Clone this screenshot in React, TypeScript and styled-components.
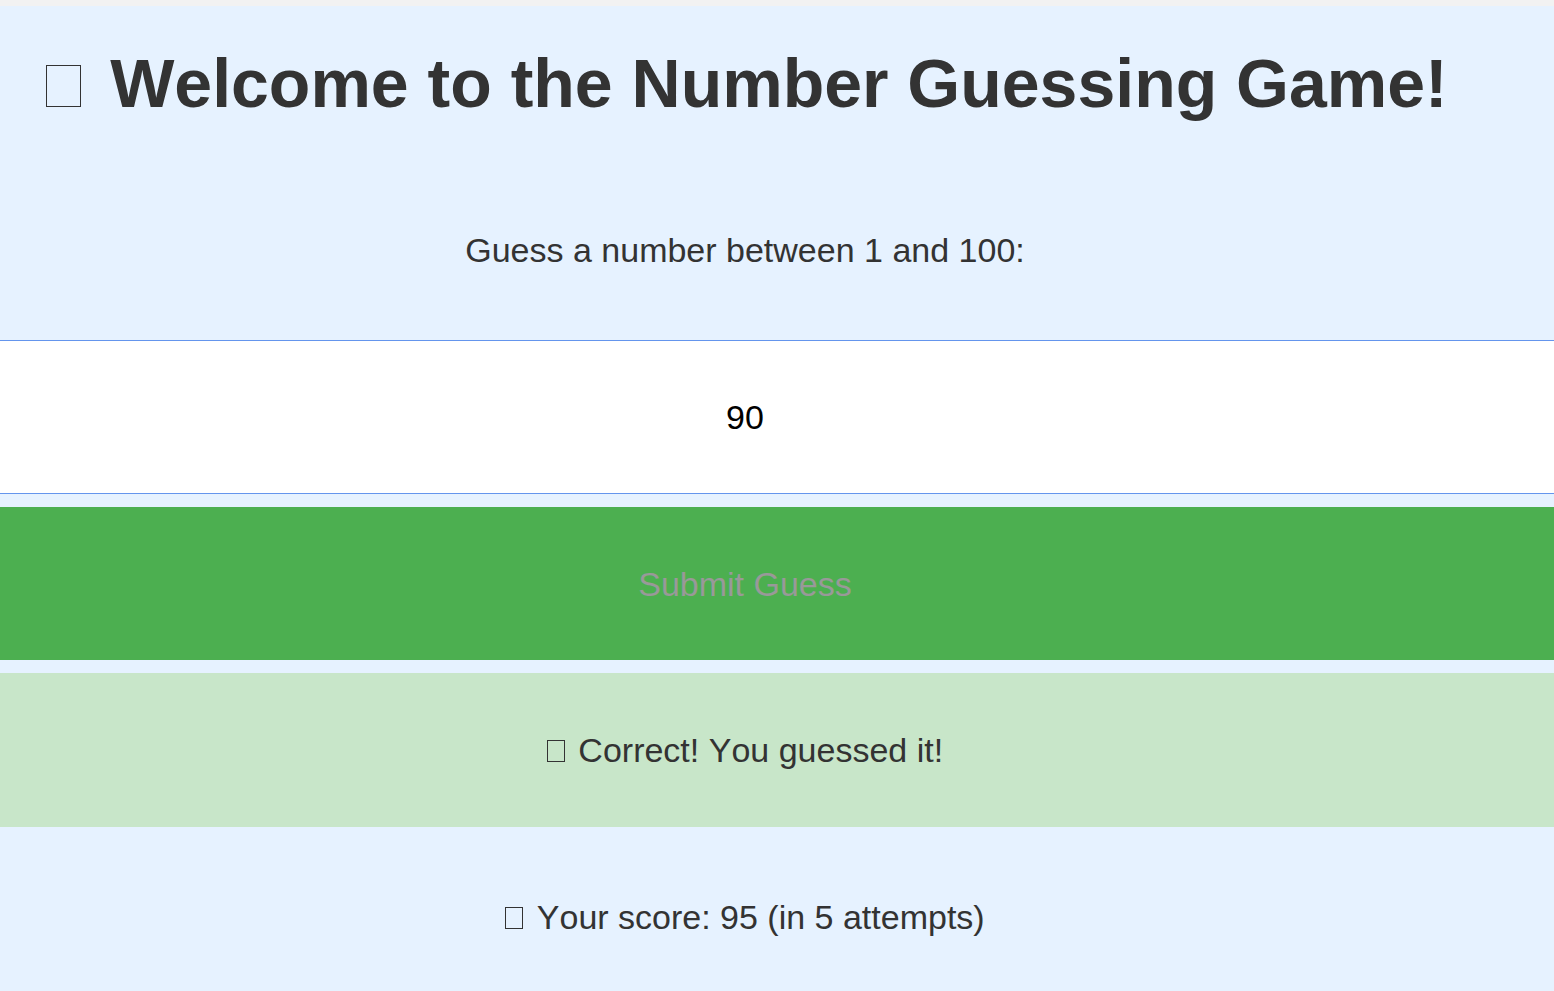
import React, { useState } from "react";
import styled, { createGlobalStyle, css } from "styled-components";

const GlobalStyle = createGlobalStyle`
  * {
    box-sizing: border-box;
  }

  body {
    margin: 0;
    background: #e6f2ff;
    color: #333333;
    font-family: "Liberation Sans", Arial, sans-serif;
    font-size: 34px;
    line-height: 40px;
    font-kerning: none;
  }
`;

const Page = styled.main`
  min-height: 100vh;
  border-top: 6px solid #f2f2f2;
`;

const GameForm = styled.form`
  display: flex;
  flex-direction: column;
  gap: 13px;
  text-align: center;
`;

const rowSpace = css`
  width: 100%;
  padding: 57px 64px 57px 0;
`;

const Title = styled.h1`
  margin: 0;
  padding: 37px 60px 37px 0;
  font-size: 68px;
  line-height: 80px;
  white-space: nowrap;
`;

const Prompt = styled.label`
  ${rowSpace}
`;

const GuessInput = styled.input`
  ${rowSpace}
  height: 154px;
  border: solid #6495ed;
  border-width: 1px 0;
  border-radius: 0;
  background: #ffffff;
  color: #000000;
  font: inherit;
  font-kerning: none;
  text-align: center;
  outline: none;
`;

const SubmitButton = styled.button`
  ${rowSpace}
  height: 153px;
  border: 0;
  background: #4caf50;
  color: #999999;
  font: inherit;
  font-kerning: none;
`;

const Result = styled.output<{ $correct?: boolean }>`
  ${rowSpace}
  padding-bottom: ${({ $correct }) => ($correct ? "57px" : "0")};
  background: ${({ $correct }) => ($correct ? "#c8e6c9" : "transparent")};
`;

const GlyphBox = styled.span<{ $large?: boolean }>`
  display: inline-block;
  width: ${({ $large }) => ($large ? "35px" : "18px")};
  height: ${({ $large }) => ($large ? "42px" : "22px")};
  margin-right: ${({ $large }) => ($large ? "10px" : "4px")};
  border: 1px solid #333333;
`;

export default function App() {
  const [guess, setGuess] = useState("90");

  return (
    <>
      <GlobalStyle />
      <Page>
        <GameForm onSubmit={(event) => event.preventDefault()}>
          <Title>
            <GlyphBox $large aria-hidden="true" /> Welcome to the Number Guessing Game!
          </Title>
          <Prompt htmlFor="guess">Guess a number between 1 and 100:</Prompt>
          <GuessInput
            id="guess"
            type="text"
            inputMode="numeric"
            value={guess}
            onChange={(event) => setGuess(event.target.value)}
          />
          <SubmitButton type="submit" disabled>
            Submit Guess
          </SubmitButton>
          <Result $correct htmlFor="guess">
            <GlyphBox aria-hidden="true" /> Correct! You guessed it!
          </Result>
          <Result htmlFor="guess">
            <GlyphBox aria-hidden="true" /> Your score: 95 (in 5 attempts)
          </Result>
        </GameForm>
      </Page>
    </>
  );
}
